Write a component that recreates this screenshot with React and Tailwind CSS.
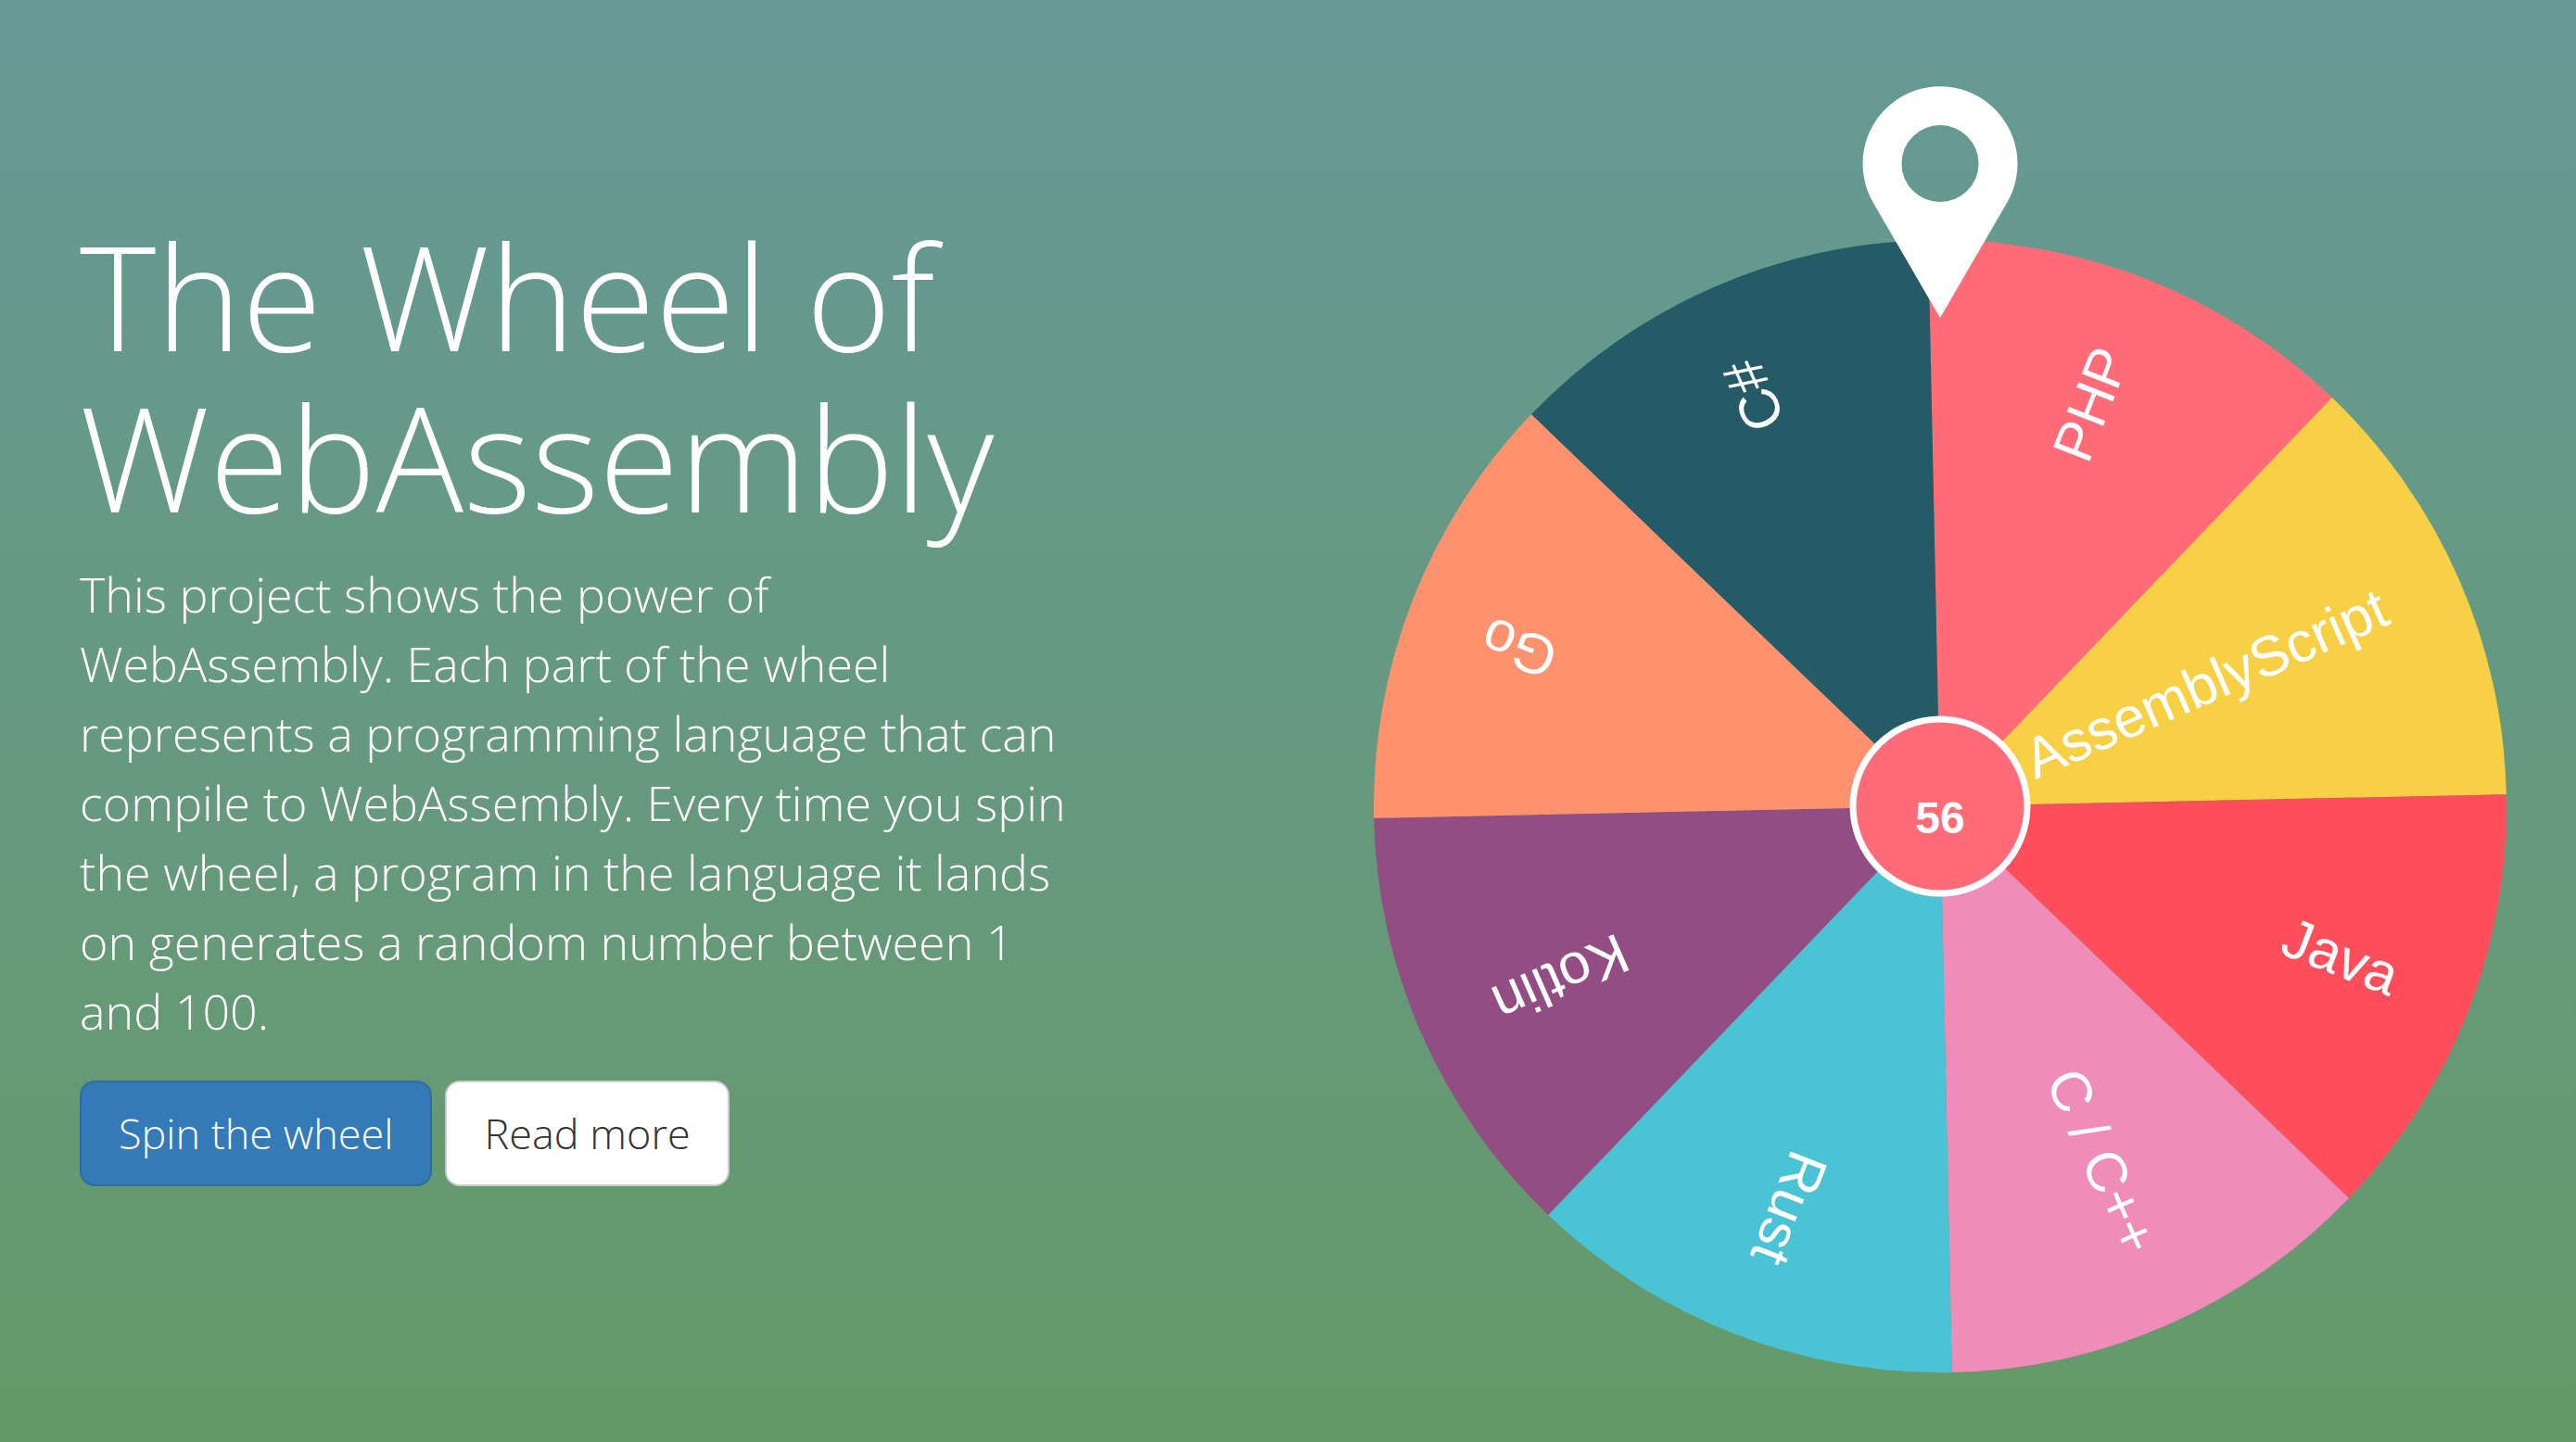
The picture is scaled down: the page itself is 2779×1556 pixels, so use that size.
const SLICES = [
  { label: "PHP", color: "#ff6b76" },
  { label: "AssemblyScript", color: "#f7d046" },
  { label: "Java", color: "#ff4e5b" },
  { label: "C / C++", color: "#ef8cba" },
  { label: "Rust", color: "#4ac4d4" },
  { label: "Kotlin", color: "#924d83" },
  { label: "Go", color: "#fe926f" },
  { label: "C#", color: "#245b66" },
];

const RADIUS = 611;
const STEP = 360 / SLICES.length;
const START = -91.2;

function pointAt(degrees) {
  const a = (degrees * Math.PI) / 180;
  return `${RADIUS * Math.cos(a)} ${RADIUS * Math.sin(a)}`;
}

function Wheel({ value }) {
  return (
    <svg viewBox="-611 -779 1222 1390" className="h-auto w-full" role="img" aria-label="Wheel of programming languages">
      {SLICES.map((slice, i) => {
        const from = START + i * STEP;
        return (
          <g key={slice.label}>
            <path d={`M0 0L${pointAt(from)}A${RADIUS} ${RADIUS} 0 0 1 ${pointAt(from + STEP)}Z`} fill={slice.color} />
            <g transform={`rotate(${from + STEP / 2})`}>
              <text x="526" y="15" textAnchor="end" fill="#fff" className="font-['Liberation_Sans'] text-[61px]">
                {slice.label}
              </text>
            </g>
          </g>
        );
      })}
      <circle r="94" fill="#ff6b76" stroke="#fff" strokeWidth="7" />
      <text y="29" textAnchor="middle" fill="#fff" className="font-['Liberation_Sans'] text-[48px] font-bold">
        {value}
      </text>
      {/* Pointer above the wheel */}
      <path
        fill="#fff"
        fillRule="evenodd"
        d="M0 -527L-72 -651A83.5 83.5 0 1 1 72 -651ZM0 -735A41.5 41.5 0 1 0 0 -652A41.5 41.5 0 1 0 0 -735Z"
      />
    </svg>
  );
}

export default function App() {
  return (
    <main className="flex min-h-screen items-start justify-between gap-12 bg-linear-to-b from-[#669996] to-[#669968] pr-[75px] pl-[86px] font-['Open_Sans',sans-serif] font-light text-white">
      <section className="w-[1076px] pt-[231px]">
        <h1 className="text-[157px] leading-[174px]">The Wheel of WebAssembly</h1>
        <p className="mt-6 text-[52px] leading-[75px]">
          This project shows the power of WebAssembly. Each part of the wheel represents a programming language that can
          compile to WebAssembly. Every time you spin the wheel, a program in the language it lands on generates a random
          number between 1 and 100.
        </p>
        <div className="mt-[38px] flex gap-[14px]">
          <button type="button" className="rounded-2xl border-2 border-[#2e6da4] bg-[#337ab7] px-10 py-6 text-[45px] leading-[62px]">
            Spin the wheel
          </button>
          <button type="button" className="rounded-2xl border-2 border-[#cccccc] bg-white px-10 py-6 text-[45px] leading-[62px] text-[#333333]">
            Read more
          </button>
        </div>
      </section>
      <section className="w-[1222px] pt-[91px]">
        <Wheel value={56} />
      </section>
    </main>
  );
}
